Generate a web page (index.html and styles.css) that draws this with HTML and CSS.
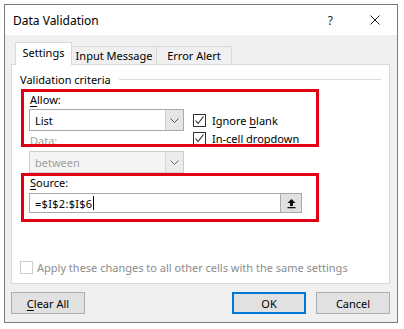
FILE: index.html
```html
<!DOCTYPE html>
<html lang="en">
<head>
  <meta charset="UTF-8">
  <title>Data Validation</title>
  <link rel="stylesheet" href="styles.css">
</head>
<body>
  <div class="dialog">
    <div class="titlebar">
      <span class="title">Data Validation</span>
      <span class="help">?</span>
      <svg class="close" width="10" height="10" viewBox="0 0 10 10">
        <path d="M0.5 0.5 L9.5 9.5 M9.5 0.5 L0.5 9.5" stroke="#1a1a1a" stroke-width="1"/>
      </svg>
    </div>

    <div class="tabs">
      <div class="tab active">Settings</div>
      <div class="tab">Input Message</div>
      <div class="tab">Error Alert</div>
    </div>

    <div class="panel">
      <div class="legend"><span>Validation criteria</span><i class="rule"></i></div>

      <div class="criteria">
        <div class="col">
          <div class="lbl"><u>A</u>llow:</div>
          <div class="combo">
            <span class="val">List</span>
            <span class="drop"><svg width="9" height="5" viewBox="0 0 9 5"><path d="M0.5 0.5 L4.5 4.5 L8.5 0.5" fill="none" stroke="#555" stroke-width="1"/></svg></span>
          </div>
          <div class="lbl off">Data:</div>
          <div class="combo off">
            <span class="val">between</span>
            <span class="drop"><svg width="9" height="5" viewBox="0 0 9 5"><path d="M0.5 0.5 L4.5 4.5 L8.5 0.5" fill="none" stroke="#666" stroke-width="1"/></svg></span>
          </div>
        </div>
        <div class="checks">
          <div class="check">
            <span class="box"><svg width="11" height="11" viewBox="0 0 11 11"><path d="M1.5 5.5 L4 8.5 L9.5 1.5" fill="none" stroke="#222" stroke-width="1.1"/></svg></span>
            <span>Ignore <u>b</u>lank</span>
          </div>
          <div class="check">
            <span class="box"><svg width="11" height="11" viewBox="0 0 11 11"><path d="M1.5 5.5 L4 8.5 L9.5 1.5" fill="none" stroke="#222" stroke-width="1.1"/></svg></span>
            <span><u>I</u>n-cell dropdown</span>
          </div>
        </div>
      </div>

      <div class="lbl src"><u>S</u>ource:</div>
      <div class="source">
        <span class="val">=$I$2:$I$6<i class="caret"></i></span>
        <span class="collapse"><svg width="11" height="11" viewBox="0 0 11 11"><path d="M5.5 1 L1.5 5 H4 V8 H7 V5 H9.5 Z" fill="#111"/><rect x="1.5" y="9" width="8" height="1.3" fill="#111"/></svg></span>
      </div>

      <div class="apply">
        <span class="box off"></span>
        <span>Apply these changes to all other cells with the same settings</span>
      </div>
    </div>

    <div class="buttons">
      <button class="btn"><u>C</u>lear All</button>
      <span class="spacer"></span>
      <button class="btn default">OK</button>
      <button class="btn">Cancel</button>
    </div>

    <div class="mark mark-allow"></div>
    <div class="mark mark-source"></div>
  </div>
</body>
</html>
```

FILE: styles.css
```css
body {
  margin: 0;
  background-color: #fff;
  color: #000;
  font-family: 'Noto Sans', 'Open Sans', sans-serif;
  font-size: 11px;
}
u {
  text-decoration-thickness: 1px;
  text-underline-offset: 2px;
}
.dialog {
  position: relative;
  margin: 4px;
  width: 394px;
  height: 319px;
  box-sizing: border-box;
  border: 1px solid #7a7a7a;
  background-color: #f0f0f0;
  display: flex;
  flex-direction: column;
}
.titlebar {
  height: 30px;
  background-color: #fff;
  display: flex;
  align-items: center;
  padding-left: 8px;
  padding-right: 17px;
}
.title {
  font-size: 12px;
  flex: 1;
}
.help {
  font-size: 12px;
  margin-right: 37px;
  color: #222;
}
.tabs {
  display: flex;
  align-items: flex-end;
  height: 22px;
  margin: 7px 0 0 10px;
}
.tab {
  height: 18px;
  box-sizing: border-box;
  border: 1px solid #d9d9d9;
  border-bottom: none;
  background-color: #f0f0f0;
  display: flex;
  align-items: center;
  justify-content: center;
}
.tab:nth-child(1) { width: 57px; }
.tab:nth-child(2) { width: 85px; border-left: none; }
.tab:nth-child(3) { width: 75px; border-left: none; }
.tab.active {
  height: 23px;
  margin-bottom: -1px;
  background-color: #fff;
  position: relative;
  z-index: 1;
  padding-bottom: 3px;
}
.panel {
  margin: 0 7px 0 6px;
  height: 220px;
  box-sizing: border-box;
  border: 1px solid #d9d9d9;
  background-color: #fff;
  padding: 6px 8px 8px 8px;
  display: flex;
  flex-direction: column;
}
.legend {
  height: 16px;
  display: flex;
  align-items: center;
}
.legend .rule {
  flex: 1;
  height: 1px;
  background-color: #dcdcdc;
  margin: 1px 0 0 8px;
}
.criteria {
  display: flex;
  margin-left: 9px;
}
.col {
  width: 155px;
}
.lbl {
  height: 16px;
  line-height: 16px;
  margin-top: 2px;
  margin-left: 1px;
}
.criteria .col .lbl:first-child {
  margin-top: 5px;
}
.lbl.off {
  color: #a0a0a0;
}
.lbl.src {
  margin-left: 10px;
}
.combo, .source {
  height: 22px;
  box-sizing: border-box;
  border: 1px solid #a9a9a9;
  background-color: #fff;
  margin-top: 1px;
  display: flex;
  align-items: stretch;
}
.combo .val, .source .val {
  flex: 1;
  display: flex;
  align-items: center;
  padding-left: 5px;
}
.combo .drop {
  width: 17px;
  background-color: #e6e6e6;
  border-left: 1px solid #d0d0d0;
  display: flex;
  align-items: center;
  justify-content: center;
}
.combo.off {
  border-color: #cccccc;
  background-color: #f4f4f4;
  color: #a0a0a0;
  margin-top: 2px;
}
.combo.off .drop {
  background-color: #ececec;
  border-left-color: #dadada;
}
.checks {
  padding-top: 24px;
  margin-left: 9px;
}
.check {
  height: 18px;
  display: flex;
  align-items: center;
  gap: 6px;
}
.box {
  width: 13px;
  height: 13px;
  box-sizing: border-box;
  border: 1px solid #333;
  background-color: #fff;
  display: flex;
  align-items: center;
  justify-content: center;
}
.box.off {
  border-color: #cccccc;
}
.source {
  margin: 2px 0 0 9px;
  width: 273px;
  height: 20px;
}
.source .val {
  letter-spacing: 0.3px;
}
.caret {
  display: inline-block;
  width: 1px;
  height: 14px;
  background-color: #000;
  margin-left: 1px;
}
.source .collapse {
  width: 20px;
  background-color: #e1e1e1;
  border-left: 1px solid #adadad;
  display: flex;
  align-items: center;
  justify-content: center;
}
.apply {
  margin-top: auto;
  height: 16px;
  display: flex;
  align-items: center;
  gap: 4px;
  color: #8c8c8c;
}
.buttons {
  display: flex;
  gap: 10px;
  margin: 8px 7px 0 6px;
}
.spacer {
  flex: 1;
}
.btn {
  width: 74px;
  height: 22px;
  box-sizing: border-box;
  border: 1px solid #adadad;
  background-color: #e1e1e1;
  font-family: inherit;
  font-size: 11px;
  color: #000;
  padding: 0;
}
.btn.default {
  border: 2px solid #0078d7;
}
.mark {
  position: absolute;
  left: 16px;
  width: 298px;
  box-sizing: border-box;
  border: 3px solid #e00012;
  pointer-events: none;
}
.mark-allow {
  top: 84px;
  height: 58px;
}
.mark-source {
  top: 168px;
  height: 49px;
}
```
